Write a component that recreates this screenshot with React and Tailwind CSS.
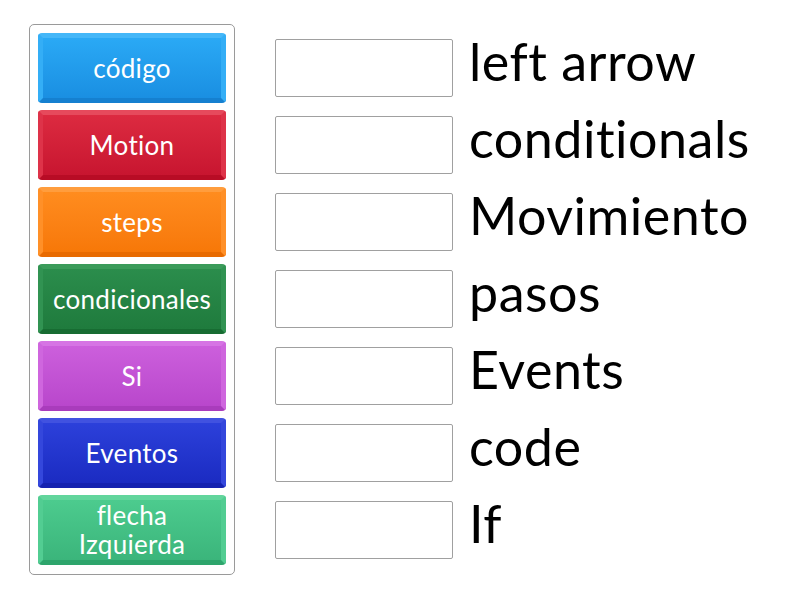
import React from "react";

const tiles = [
  { t: "código", c: "from-[#2aa9f5] to-[#1a8fe2]", b: "border-t-[#45b7f8] border-x-[#34aef6] border-b-[#1580d0]" },
  { t: "Motion", c: "from-[#dc2a40] to-[#c81530]", b: "border-t-[#e64a5c] border-x-[#de3349] border-b-[#b80c25]" },
  { t: "steps", c: "from-[#ff8c1e] to-[#f77808]", b: "border-t-[#ff9d3d] border-x-[#ff9028] border-b-[#e86a00]" },
  { t: "condicionales", c: "from-[#2b8d4c] to-[#1f7b3d]", b: "border-t-[#3b9b5a] border-x-[#319352] border-b-[#176c32]" },
  { t: "Si", c: "from-[#cc5fdc] to-[#b947cc]", b: "border-t-[#d674e4] border-x-[#cf66de] border-b-[#a93cbc]" },
  { t: "Eventos", c: "from-[#2c40da] to-[#1b2bc2]", b: "border-t-[#4152e0] border-x-[#3447dc] border-b-[#1522b0]" },
  { t: "flecha Izquierda", c: "from-[#4ccb8e] to-[#3bb57b]", b: "border-t-[#62d59c] border-x-[#52cd92] border-b-[#2ea56c]" },
];

const answers = ["left arrow", "conditionals", "Movimiento", "pasos", "Events", "code", "If"];

export default function App() {
  return (
    <div className="w-[800px] h-[600px] bg-white flex pl-[29px] pt-[24px] [font-variant-ligatures:none]" style={{ fontFamily: "Lato, 'Open Sans', sans-serif" }}>
      <div className="w-[206px] h-[551px] border border-[#9a9a9a] rounded-[5px] p-[8px] flex flex-col gap-[7px]">
        {tiles.map((x) => (
          <div
            key={x.t}
            className={`h-[70px] rounded-[4px] border-[5px] ${x.b} bg-gradient-to-b ${x.c} flex items-center justify-center text-white text-[26px] leading-[29px] text-center tracking-[0.3px]`}
          >
            <span className="max-w-[160px]">{x.t}</span>
          </div>
        ))}
      </div>
      <div className="ml-[40px] pt-[15px] flex flex-col gap-[19px]">
        {answers.map((a) => (
          <div key={a} className="flex items-center h-[58px]">
            <div className="w-[178px] h-[58px] border border-[#a0a0a0] rounded-[2px] bg-white shrink-0"></div>
            <div className="ml-[16px] text-black text-[52px] leading-none whitespace-nowrap -mt-[14px] tracking-[0.5px]">{a}</div>
          </div>
        ))}
      </div>
    </div>
  );
}
